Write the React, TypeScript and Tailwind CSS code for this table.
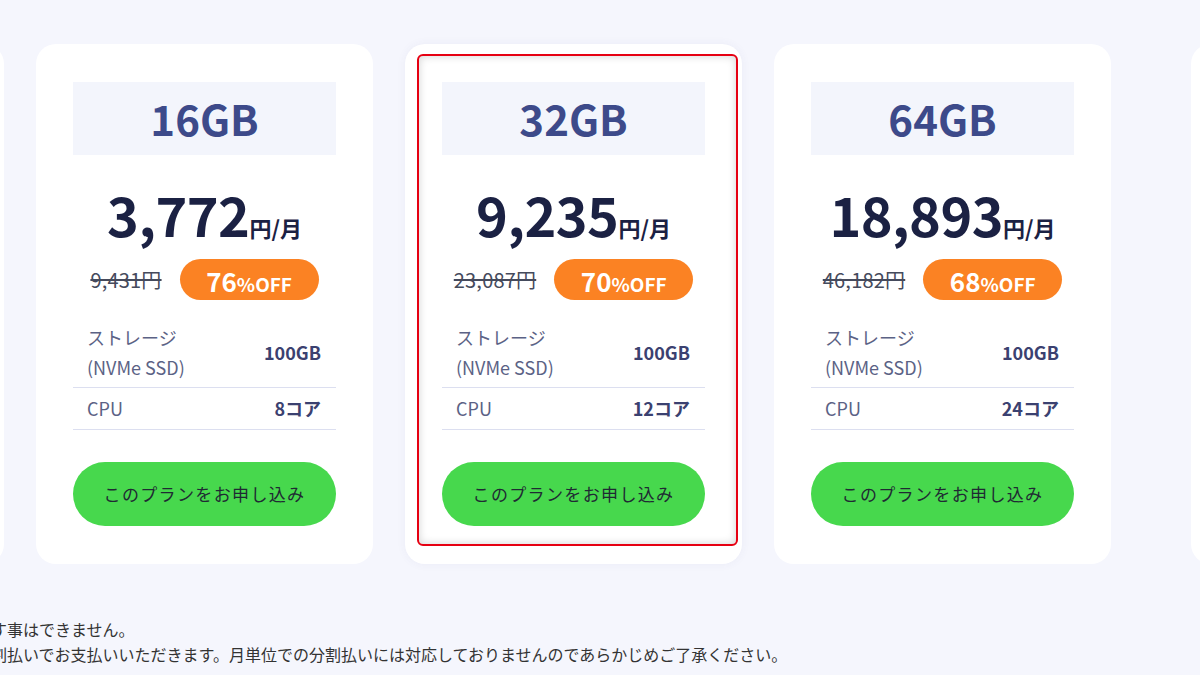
import React from "react";

interface Plan {
  memory: string;
  price: string;
  original: string;
  off: string;
  cpu: string;
}

const plans: Plan[] = [
  { memory: "8GB", price: "1,886", original: "4,715円", off: "60", cpu: "6コア" },
  { memory: "16GB", price: "3,772", original: "9,431円", off: "76", cpu: "8コア" },
  { memory: "32GB", price: "9,235", original: "23,087円", off: "70", cpu: "12コア" },
  { memory: "64GB", price: "18,893", original: "46,182円", off: "68", cpu: "24コア" },
];

const PlanCard: React.FC<{ plan: Plan; selected?: boolean }> = ({ plan, selected }) => {
  return (
    <div
      className={
        "relative w-[337px] shrink-0 bg-white rounded-[20px] pt-[38px] px-[37px] pb-[38px] " +
        (selected ? "shadow-[0_0_10px_rgba(60,70,140,0.06)]" : "")
      }
    >
      <div className="h-[73px] pb-[2px] bg-[#f3f5fc] flex items-center justify-center text-[42px] font-bold text-[#3d4a8a] leading-none">
        {plan.memory}
      </div>

      <div className="mt-[32px] flex items-end justify-center leading-none text-[#1b2143]">
        <span className="text-[54px] font-bold tracking-[-0.01em]">{plan.price}</span>
        <span className="text-[22px] font-bold mb-[3px]">円/月</span>
      </div>

      <div className="mt-[18px] flex items-center justify-center gap-[18px]">
        <span className="line-through text-[20px] text-[#454a5c] tracking-[0.01em]">{plan.original}</span>
        <span className="w-[139px] h-[41px] rounded-full bg-[#fb8223] text-white font-bold flex items-end justify-center pb-[6px] leading-none">
          <span className="text-[26px]">{plan.off}</span>
          <span className="text-[19px] mb-[1px]">%OFF</span>
        </span>
      </div>

      {/* spec table */}
      <div className="mt-[17px] text-[18px]">
        <div className="flex items-center justify-between pl-[14px] pr-[15px] py-[5px] border-b border-[#dcdff0]">
          <div className="text-[#5b6285] leading-[30px]">
            ストレージ
            <br />
            (NVMe SSD)
          </div>
          <div className="font-bold text-[#3b4170]">100GB</div>
        </div>
        <div className="flex items-center justify-between pl-[14px] pr-[15px] h-[42px] border-b border-[#dcdff0]">
          <div className="text-[#5b6285]">CPU</div>
          <div className="font-bold text-[#3b4170]">{plan.cpu}</div>
        </div>
      </div>

      <button className="mt-[32px] h-[64px] w-full rounded-full bg-[#47d84d] text-[#1f2a33] text-[17px] tracking-[0.08em]">
        このプランをお申し込み
      </button>

      {selected && (
        <div className="absolute left-[12px] top-[10px] right-[4px] bottom-[18px] rounded-[6px] border-2 border-[#e60012] shadow-[inset_0_0_8px_rgba(0,0,0,0.18)] pointer-events-none" />
      )}
    </div>
  );
};

export default function App() {
  return (
    <div
      className="w-[1200px] h-[675px] overflow-hidden bg-[#f5f6fd]"
      style={{ fontFamily: '"Noto Sans CJK JP", "Noto Sans", sans-serif' }}
    >
      <div className="flex gap-[32px] pt-[44px] ml-[-333px]">
        <PlanCard plan={plans[0]} />
        <PlanCard plan={plans[1]} />
        <PlanCard plan={plans[2]} selected />
        <PlanCard plan={plans[3]} />
        <div className="ml-[48px] w-[337px] shrink-0 bg-white rounded-[20px]" />
      </div>

      <div className="mt-[53px] ml-[-9px] text-[16px] leading-[25px] text-[#333333] whitespace-nowrap">
        <p>す事はできません。</p>
        <p>割払いでお支払いいただきます。月単位での分割払いには対応しておりませんのであらかじめご了承ください。</p>
      </div>
    </div>
  );
}
